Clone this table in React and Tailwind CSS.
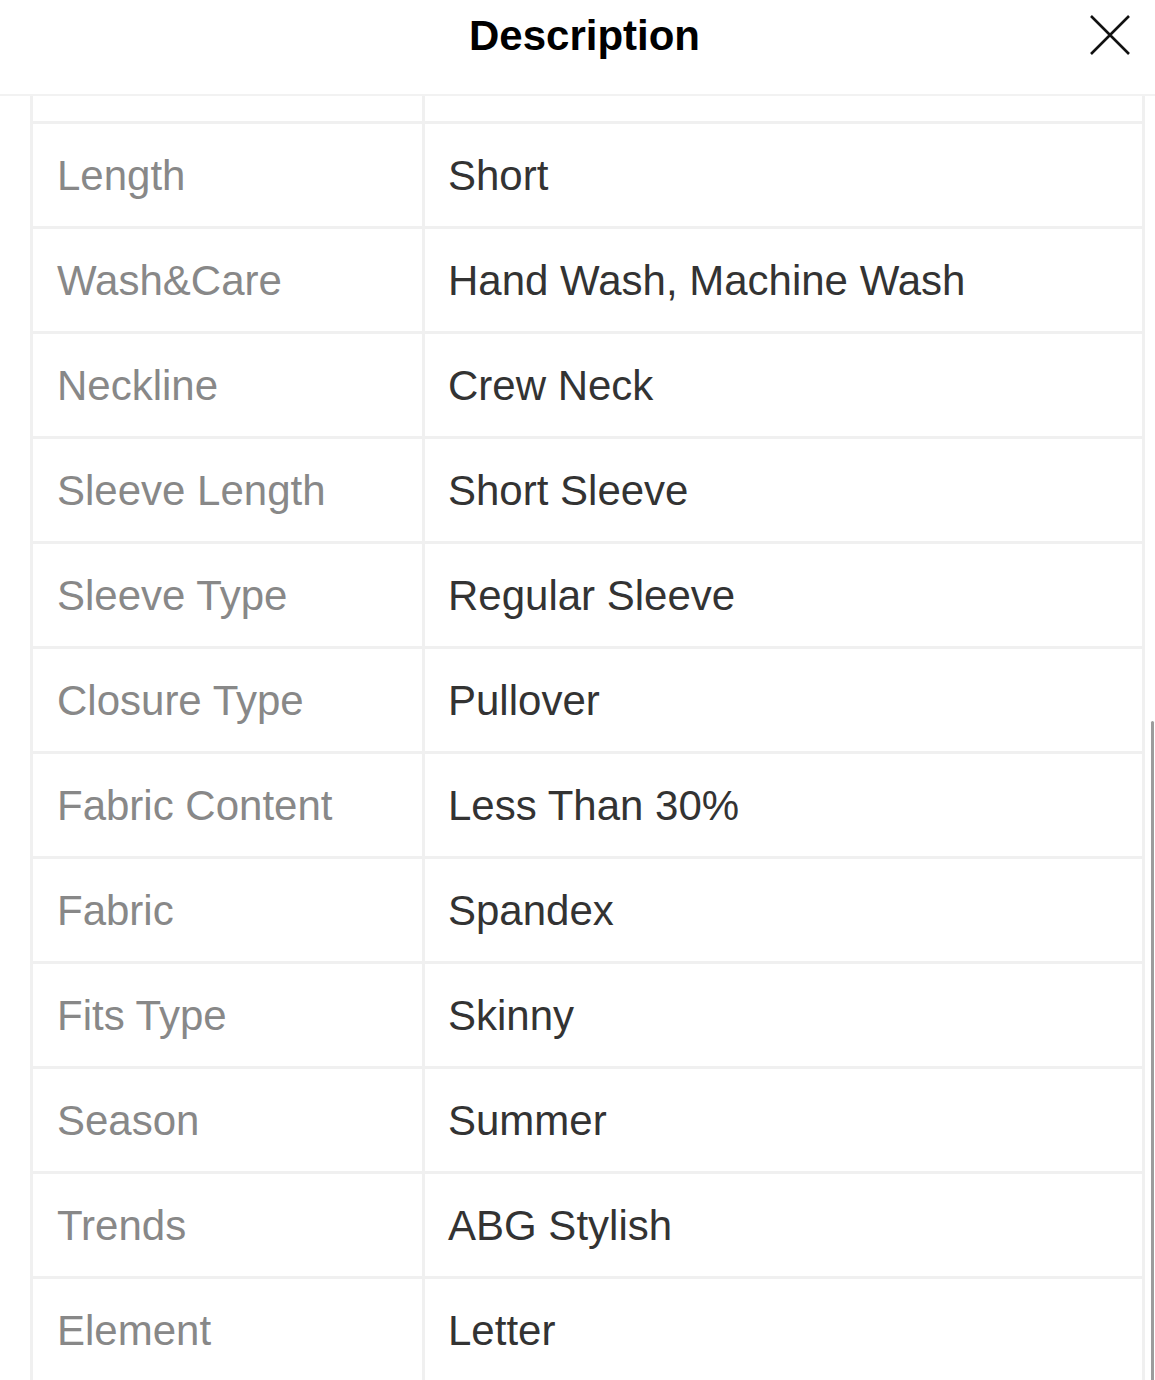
import React from "react";

const ROWS = [
  ["Length", "Short"],
  ["Wash&Care", "Hand Wash, Machine Wash"],
  ["Neckline", "Crew Neck"],
  ["Sleeve Length", "Short Sleeve"],
  ["Sleeve Type", "Regular Sleeve"],
  ["Closure Type", "Pullover"],
  ["Fabric Content", "Less Than 30%"],
  ["Fabric", "Spandex"],
  ["Fits Type", "Skinny"],
  ["Season", "Summer"],
  ["Trends", "ABG Stylish"],
  ["Element", "Letter"],
];

function CloseIcon() {
  return (
    <svg width="40" height="40" viewBox="0 0 40 40" fill="none">
      <path d="M1 1L39 39M39 1L1 39" stroke="#111" strokeWidth="2.6" />
    </svg>
  );
}

export default function App() {
  return (
    <div
      className="relative h-[1380px] overflow-hidden bg-white"
      style={{ fontFamily: '"Liberation Sans", Arial, sans-serif' }}
    >
      <div className="relative h-[96px] border-b-2 border-[#f2f2f2]">
        <div className="pt-[15px] pl-[14px] text-center text-[42px] leading-[42px] font-bold text-black">
          Description
        </div>
        <button className="absolute right-[25px] top-[15px]" aria-label="Close">
          <CloseIcon />
        </button>
      </div>

      <div className="ml-[30px] mr-[10px] border-x-[3px] border-[#f0f0f0]">
        <div className="flex h-[28px] border-b-[3px] border-[#f0f0f0]">
          <div className="w-[392px] border-r-[3px] border-[#f0f0f0]" />
          <div className="flex-1" />
        </div>
        {ROWS.map(([label, value]) => (
          <div key={label} className="flex h-[105px] border-b-[3px] border-[#f0f0f0]">
            <div className="flex w-[392px] items-center border-r-[3px] border-[#f0f0f0] pl-[24px] text-[42px] text-[#888]">
              {label}
            </div>
            <div className="flex flex-1 items-center pl-[23px] text-[42px] text-[#333]">
              {value}
            </div>
          </div>
        ))}
      </div>

      <div className="absolute right-[1px] top-[721px] h-[700px] w-[3px] rounded-full bg-[#9c9c9c]" />
    </div>
  );
}
